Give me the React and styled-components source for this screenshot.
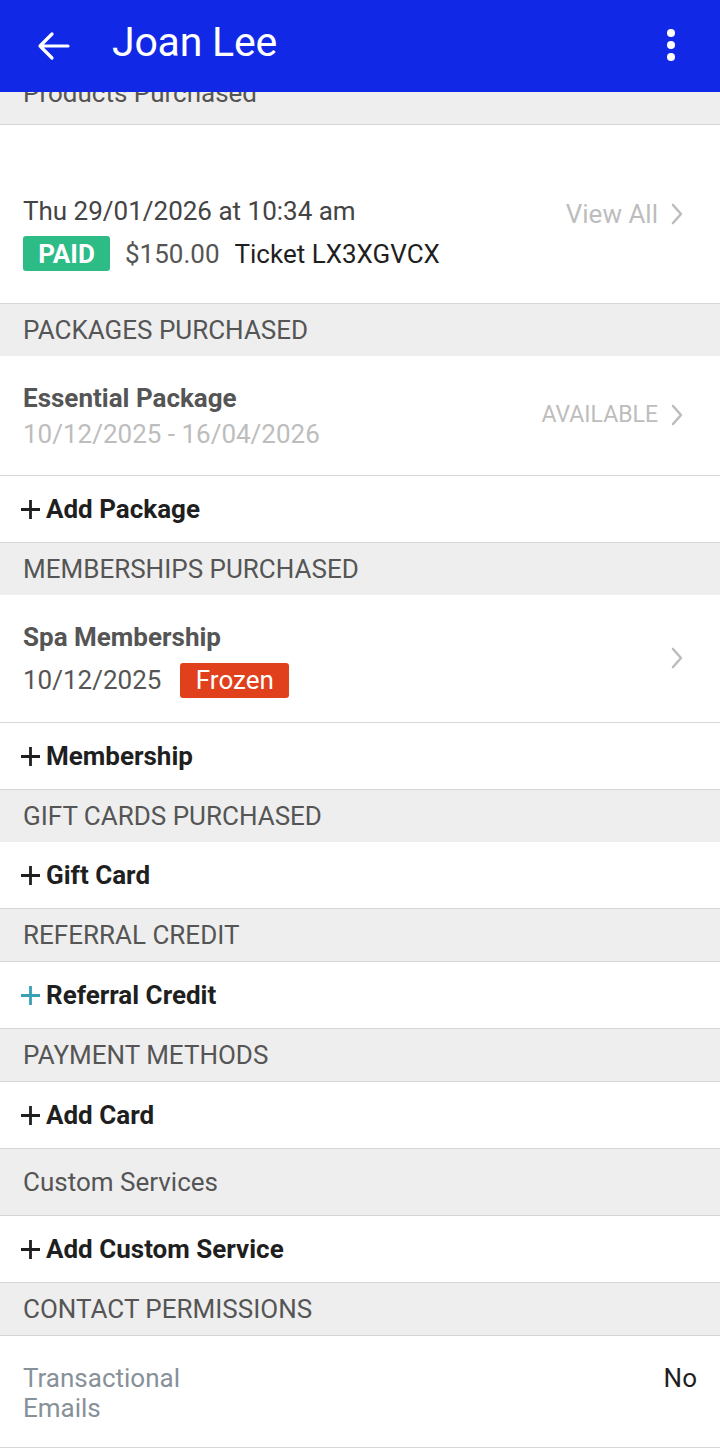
import React from "react";
import styled, { createGlobalStyle } from "styled-components";

const GlobalStyle = createGlobalStyle`
  html, body {
    margin: 0;
    padding: 0;
    background: #fff;
    font-family: Roboto, "Noto Sans", sans-serif;
  }
  * { box-sizing: border-box; }
`;

const Page = styled.div`
  width: 720px;
  min-height: 1451px;
  background: #fff;
  overflow: hidden;
`;

const AppBar = styled.div`
  height: 92px;
  background: #1129e6;
  display: flex;
  align-items: center;
  padding: 0 0 0 36px;
  color: #fff;
  position: relative;
  z-index: 2;
`;

const Title = styled.div`
  flex: 1;
  margin-left: 42px;
  font-size: 41px;
  letter-spacing: -0.2px;
  line-height: 1;
  margin-top: -8px;
`;

const Kebab = styled.div`
  width: 40px;
  margin-right: 29px;
  display: flex;
  flex-direction: column;
  align-items: center;
  gap: 4px;
  margin-top: -2px;

  span {
    width: 8px;
    height: 8px;
    border-radius: 50%;
    background: #fff;
  }
`;

const ScrolledStrip = styled.div`
  height: 33px;
  background: #eeeeee;
  border-bottom: 1px solid #d6d6d6;
  overflow: hidden;
  padding-left: 23px;
  font-size: 26px;
  color: #555;
  line-height: 30px;

  div {
    margin-top: -14px;
  }
`;

const SectionHeader = styled.div`
  height: ${(p) => p.$h || 52}px;
  background: #eeeeee;
  display: flex;
  align-items: center;
  padding-left: 23px;
  font-size: 26px;
  color: #555;
  text-transform: ${(p) => (p.$plain ? "none" : "uppercase")};
  border-bottom: ${(p) => (p.$line ? "1px solid #d6d6d6" : "none")};
`;

const Row = styled.div`
  height: ${(p) => p.$h}px;
  display: flex;
  align-items: flex-start;
  justify-content: space-between;
  padding: ${(p) => p.$pad || "0 23px"};
  border-bottom: 1px solid #d6d6d6;
  background: #fff;
`;

const Stack = styled.div`
  display: flex;
  flex-direction: column;
`;

const DateLine = styled.div`
  font-size: 26px;
  line-height: 32px;
  color: #444;
`;

const Inline = styled.div`
  display: flex;
  align-items: center;
  gap: ${(p) => p.$gap || 15}px;
  margin-top: ${(p) => p.$mt || 0}px;
`;

const Badge = styled.span`
  display: inline-flex;
  align-items: center;
  justify-content: center;
  height: 35px;
  min-width: ${(p) => p.$w}px;
  border-radius: 3px;
  background: ${(p) => p.$bg};
  color: #fff;
  font-size: 26px;
  font-weight: ${(p) => p.$weight || 400};
  padding: 0 10px;
`;

const Amount = styled.span`
  font-size: 26px;
  color: #555;
`;

const Ticket = styled.span`
  font-size: 26px;
  color: #1f1f1f;
`;

const Side = styled.div`
  display: flex;
  align-items: center;
  gap: 12px;
  font-size: ${(p) => p.$size || 26}px;
  line-height: 32px;
  color: #bdbdbd;
  margin-right: 13px;
  margin-top: ${(p) => p.$mt || 0}px;
`;

const ItemTitle = styled.div`
  font-size: 26px;
  line-height: 36px;
  font-weight: 700;
  color: #555;
`;

const ItemSub = styled.div`
  font-size: 26px;
  line-height: 36px;
  color: ${(p) => p.$color || "#bdbdbd"};
`;

const AddRow = styled.div`
  height: 67px;
  display: flex;
  align-items: center;
  gap: 5px;
  padding-left: 20px;
  border-bottom: 1px solid #d6d6d6;
  font-size: 26px;
  font-weight: 700;
  color: #1f1f1f;
`;

const PermLabel = styled.div`
  font-size: 26px;
  line-height: 30px;
  color: #86919a;
  width: 200px;
`;

const PermValue = styled.div`
  font-size: 26px;
  line-height: 30px;
  color: #1f1f1f;
`;

const BackArrow = () => (
  <svg width="34" height="34" viewBox="0 0 34 34" fill="none">
    <path d="M32 17H4M16 5L4 17l12 12" stroke="#fff" strokeWidth="3.2" strokeLinecap="round" strokeLinejoin="round" />
  </svg>
);

const Chevron = () => (
  <svg width="14" height="22" viewBox="0 0 14 22" fill="none">
    <path d="M3 2l8 9-8 9" stroke="#bdbdbd" strokeWidth="2.6" strokeLinecap="round" strokeLinejoin="round" />
  </svg>
);

const Plus = ({ color = "#1f1f1f" }) => (
  <svg width="21" height="21" viewBox="0 0 21 21" fill="none">
    <path d="M10.5 1v19M1 10.5h19" stroke={color} strokeWidth="2.8" />
  </svg>
);

const Add = ({ label, color }) => (
  <AddRow>
    <Plus color={color} />
    {label}
  </AddRow>
);

const App = () => {
  return (
    <Page>
      <GlobalStyle />
      <AppBar>
        <BackArrow />
        <Title>Joan Lee</Title>
        <Kebab>
          <span />
          <span />
          <span />
        </Kebab>
      </AppBar>

      <ScrolledStrip>
        <div>Products Purchased</div>
      </ScrolledStrip>

      <Row $h={179} $pad="70px 23px 0">
        <Stack>
          <DateLine>Thu 29/01/2026 at 10:34 am</DateLine>
          <Inline $mt={9}>
            <Badge $bg="#2dbb86" $w={87} $weight={700}>PAID</Badge>
            <Amount>$150.00</Amount>
            <Ticket>Ticket LX3XGVCX</Ticket>
          </Inline>
        </Stack>
        <Side $mt={3}>
          View All <Chevron />
        </Side>
      </Row>

      <SectionHeader>Packages Purchased</SectionHeader>
      <Row $h={120} $pad="24px 23px 0">
        <Stack>
          <ItemTitle>Essential Package</ItemTitle>
          <ItemSub>10/12/2025 - 16/04/2026</ItemSub>
        </Stack>
        <Side $size={23} $mt={19}>
          AVAILABLE <Chevron />
        </Side>
      </Row>
      <Add label="Add Package" />

      <SectionHeader>Memberships Purchased</SectionHeader>
      <Row $h={128} $pad="24px 23px 0">
        <Stack>
          <ItemTitle>Spa Membership</ItemTitle>
          <Inline $mt={7} $gap={19}>
            <ItemSub $color="#555">10/12/2025</ItemSub>
            <Badge $bg="#e0411c" $w={109}>Frozen</Badge>
          </Inline>
        </Stack>
        <Side $mt={28}>
          <Chevron />
        </Side>
      </Row>
      <Add label="Membership" />

      <SectionHeader>Gift Cards Purchased</SectionHeader>
      <Add label="Gift Card" />

      <SectionHeader $line $h={53}>Referral Credit</SectionHeader>
      <Add label="Referral Credit" color="#3a9fb4" />

      <SectionHeader $line $h={53}>Payment Methods</SectionHeader>
      <Add label="Add Card" />

      <SectionHeader $plain $line $h={67}>Custom Services</SectionHeader>
      <Add label="Add Custom Service" />

      <SectionHeader $line $h={53}>Contact Permissions</SectionHeader>
      <Row $h={112} $pad="27px 23px 0">
        <PermLabel>Transactional Emails</PermLabel>
        <PermValue>No</PermValue>
      </Row>
    </Page>
  );
};

export default App;
